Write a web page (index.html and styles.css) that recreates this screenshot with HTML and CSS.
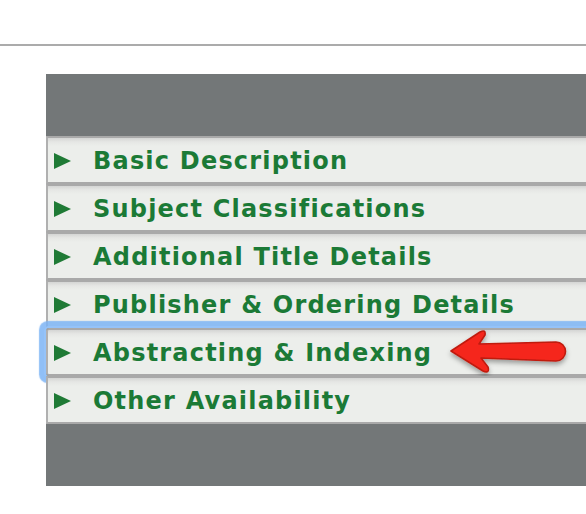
FILE: index.html
```html
<!DOCTYPE html>
<html>
<head>
<meta charset="utf-8">
<link rel="stylesheet" href="styles.css">
</head>
<body>
<div class="rule"></div>
<div class="panel">
  <div class="panel-head"></div>
  <ul class="menu">
    <li class="row"><span class="tri"></span><span class="label">Basic Description</span></li>
    <li class="row"><span class="tri"></span><span class="label">Subject Classifications</span></li>
    <li class="row"><span class="tri"></span><span class="label">Additional Title Details</span></li>
    <li class="row"><span class="tri"></span><span class="label">Publisher &amp; Ordering Details</span></li>
    <li class="row focused"><span class="tri"></span><span class="label">Abstracting &amp; Indexing</span>
      <svg class="arrow" width="130" height="60" viewBox="440 320 130 60">
        <defs>
          <filter id="sh" x="-20%" y="-30%" width="140%" height="170%">
            <feDropShadow dx="0" dy="3" stdDeviation="2.5" flood-color="#000" flood-opacity="0.35"/>
          </filter>
        </defs>
        <path filter="url(#sh)" d="M451,351 L480,332 Q486,329 485,335 L479,344 L556,342 A9.5,9.5 0 0 1 556,361 L481,358 L488,367 Q490,374 483,371 Z" fill="#f5281d" stroke="#c01a10" stroke-width="1.6" stroke-linejoin="round"/>
      </svg>
    </li>
    <li class="row"><span class="tri"></span><span class="label">Other Availability</span></li>
  </ul>
  <div class="panel-foot"></div>
</div>
</body>
</html>
```
FILE: styles.css
```css
html, body {
  margin: 0;
  padding: 0;
  background: #ffffff;
  overflow: hidden;
}
body {
  width: 586px;
  height: 514px;
}
.rule {
  margin-top: 44px;
  height: 2px;
  background: #ababab;
}
.panel {
  margin-top: 28px;
  margin-left: 46px;
  width: 560px;
  background: #737778;
}
.panel-head {
  height: 62px;
}
.panel-foot {
  height: 62px;
}
.menu {
  list-style: none;
  margin: 0;
  padding: 0;
}
.row {
  position: relative;
  height: 44px;
  border-top: 2px solid #a9a9a9;
  border-bottom: 2px solid #a9a9a9;
  border-left: 2px solid #b0b0b0;
  background: linear-gradient(#d4d5d4, #e6e7e5 4px, #eceeeb 8px, #eceeeb);
  display: flex;
  align-items: center;
  padding-left: 6px;
}
.tri {
  width: 0;
  height: 0;
  border-top: 8.5px solid transparent;
  border-bottom: 8.5px solid transparent;
  border-left: 17px solid #1f7a35;
  margin-top: 2px;
}
.label {
  margin-left: 22px;
  font-family: "DejaVu Sans", Verdana, sans-serif;
  font-weight: bold;
  font-size: 24px;
  letter-spacing: 1.2px;
  color: #1b7a36;
  white-space: nowrap;
  margin-top: 2px;
}
.focused {
  z-index: 1;
  border-radius: 3px;
  box-shadow: 0 0 0 2px rgba(150, 195, 250, 0.9), 0 0 1px 7px rgba(125, 180, 245, 0.85);
}
.focused + .row {
  z-index: 2;
}
.arrow {
  position: absolute;
  left: 392px;
  top: -10px;
  overflow: visible;
}
```
